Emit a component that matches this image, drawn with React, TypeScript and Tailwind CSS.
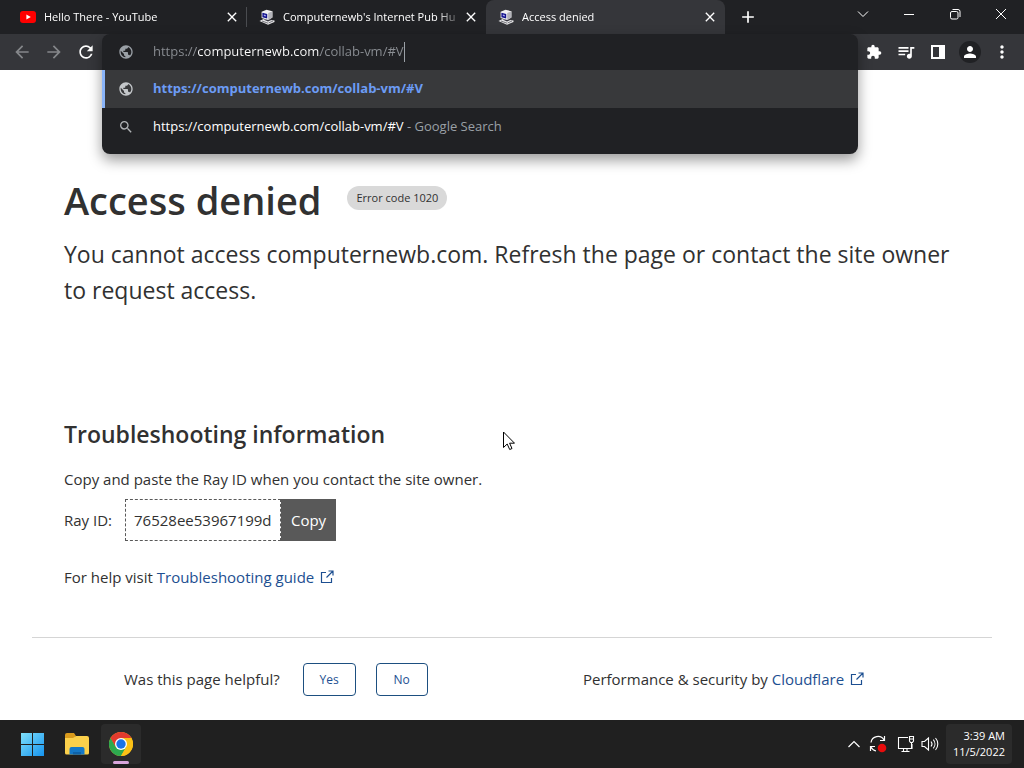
import { useState } from "react";
import {
  MdAdd,
  MdArrowBack,
  MdArrowForward,
  MdClose,
  MdExtension,
  MdMoreVert,
  MdPerson,
  MdPublic,
  MdQueueMusic,
  MdRefresh,
  MdSearch,
} from "react-icons/md";

const YoutubeIcon = () => (
  <svg className="w-4 h-4 shrink-0" viewBox="0 0 16 16">
    <rect x="0" y="2" width="16" height="12" rx="3" fill="#f00" />
    <path d="M6.4 5.4v5.2L10.8 8z" fill="#fff" />
  </svg>
);

const ComputerIcon = () => (
  <svg className="w-4 h-4 shrink-0" viewBox="0 0 16 16">
    <path d="M.5 12l4-2 11 1.500v1.500L9 15.800z" fill="#e8e8ea" />
    <path d="M3 12l6 2.200M9.500 14l4.500-2" stroke="#55555c" strokeWidth="0.8" />
    <path d="M4.500 10.500l5-.5 3.500.7-4 1.800z" fill="#3a3a42" />
    <path d="M2.600 2.800L7.500.8l5.900 1.400v6.200L9.200 11 2.600 9z" fill="#f1f1f1" />
    <path d="M9.200 4l4.200-1.800v6.200L9.200 11z" fill="#b4b4ba" />
    <path d="M3.400 3.800l4.800 1.200v4.400L3.400 8.200z" fill="#14148c" />
    <path d="M4.800 5.600l2 .5v1.500l-2-.5z" fill="#a8a8f0" />
  </svg>
);

const ExternalIcon = () => (
  <svg
    className="w-3.5 h-3.5 inline-block ml-0.5 align-[-1px]"
    viewBox="0 0 14 14"
    fill="none"
    stroke="currentColor"
    strokeWidth="1.2"
  >
    <path d="M6 2.5H1.500v10h10V8M8.500 1H13v4.500M13 1L6.500 7.500" />
  </svg>
);

const ChromeIcon = () => (
  <svg className="w-6 h-6" viewBox="0 0 24 24">
    <circle cx="12" cy="12" r="12" fill="#fbc116" />
    <path d="M1.6 6A12 12 0 0 0 12 24l5.2-9L12 12 6.8 15z" fill="#2da94f" />
    <path d="M1.6 6L6.8 15 12 12V6z" fill="#2da94f" />
    <path d="M1.6 6A12 12 0 0 1 22.4 6H12a6 6 0 0 0-5.6 4z" fill="#e33b2e" />
    <path d="M1.6 6L6.800 15 8 10l4-4z" fill="#e33b2e" />
    <path d="M22.4 6A12 12 0 0 1 12 24l5.2-9a6 6 0 0 0 0-6L12 6z" fill="#fbc116" />
    <circle cx="12" cy="12" r="6" fill="#fff" />
    <circle cx="12" cy="12" r="4.7" fill="#1a73e8" />
  </svg>
);

const tabs = [
  { title: "Hello There - YouTube", icon: <YoutubeIcon /> },
  { title: "Computernewb's Internet Pub Hu", icon: <ComputerIcon /> },
  { title: "Access denied", icon: <ComputerIcon /> },
];

function TabStrip() {
  const [active, setActive] = useState(2);

  return (
    <div className="flex h-[34px] bg-[#202124] text-white pl-2">
      {tabs.map((tab, index) => (
        <div
          key={index}
          className={
            "flex items-center w-[239px] pl-3 pr-[7px] " +
            (index === active ? "bg-[#35363a] rounded-t-lg" : "")
          }
        >
          <button
            className="flex flex-1 min-w-0 items-center gap-2 text-left"
            onClick={() => setActive(index)}
          >
            {tab.icon}
            <span className="flex-1 whitespace-nowrap text-[11px] mask-[linear-gradient(90deg,#000_154px,transparent_180px)]">
              {tab.title}
            </span>
          </button>
          <button aria-label="Close tab">
            <MdClose className="w-4 h-4" />
          </button>
          {index === 0 && <span className="w-px h-5 -mr-[7px] ml-1.5 bg-[#4a4c50]" />}
        </div>
      ))}
      <button aria-label="New tab" className="ml-[13px]">
        <MdAdd className="w-5 h-5" />
      </button>

      <div className="flex ml-auto h-7">
        <button aria-label="Search tabs" className="flex w-[46px] items-center justify-center">
          <svg className="w-3 h-3" viewBox="0 0 12 12" fill="none" stroke="#fff">
            <path d="M1 3.5l5 5 5-5" />
          </svg>
        </button>
        <button aria-label="Minimize" className="flex w-[46px] items-center justify-center">
          <svg className="w-3 h-3" viewBox="0 0 12 12" fill="none" stroke="#fff">
            <path d="M1 6.5h10" />
          </svg>
        </button>
        <button aria-label="Restore" className="flex w-[46px] items-center justify-center">
          <svg className="w-3 h-3" viewBox="0 0 12 12" fill="none" stroke="#fff">
            <rect x="1.5" y="3.5" width="7.5" height="7.5" rx="1.5" />
            <path d="M3.5 1.5H9a2 2 0 0 1 2 2V9" />
          </svg>
        </button>
        <button aria-label="Close" className="flex w-[46px] items-center justify-center">
          <svg className="w-3 h-3" viewBox="0 0 12 12" fill="none" stroke="#fff">
            <path d="M1 1l10 10M11 1L1 11" />
          </svg>
        </button>
      </div>
    </div>
  );
}

function Omnibox() {
  const [url, setUrl] = useState("https://computernewb.com/collab-vm/#V");

  return (
    <div className="absolute inset-x-0 top-0 z-10 pb-2 rounded-lg bg-[#202124] text-[13px] text-white shadow-[0_6px_14px_rgba(0,0,0,0.4)]">
      <div className="flex items-center h-9 pl-4">
        <MdPublic className="w-4 h-4 mr-[19px] text-[#9aa0a6]" />
        <input
          aria-label="Address"
          className="field-sizing-content outline-none text-transparent bg-clip-text bg-[linear-gradient(90deg,#8b8f94_44px,#fff_44px,#fff_167px,#8b8f94_167px)]"
          value={url}
          onChange={(e) => setUrl(e.target.value)}
        />
        <span className="w-px h-5 bg-[#9aa0a6]" />
      </div>
      <button className="flex items-center w-full h-[38px] pl-[13px] border-l-3 border-[#8ab4f8] bg-[#38393b]">
        <MdPublic className="w-4 h-4 mr-[19px] text-[#c4c7ca]" />
        <span className="font-bold text-[#6c9cf5]">{url}</span>
      </button>
      <button className="flex items-center w-full h-[38px] pl-4">
        <MdSearch className="w-4 h-4 mr-[19px] text-[#b0b3b6]" />
        <span>{url}</span>
        <span className="text-[#9aa0a6] whitespace-pre"> - Google Search</span>
      </button>
    </div>
  );
}

function Toolbar() {
  return (
    <div className="flex h-9 bg-[#35363a] text-white">
      <div className="flex items-center gap-3 w-[102px] pl-3">
        <button aria-label="Back">
          <MdArrowBack className="w-5 h-5 text-[#85878a]" />
        </button>
        <button aria-label="Forward">
          <MdArrowForward className="w-5 h-5 text-[#85878a]" />
        </button>
        <button aria-label="Reload">
          <MdRefresh className="w-5 h-5" />
        </button>
      </div>
      <div className="relative flex-1">
        <Omnibox />
      </div>
      <div className="flex items-center w-[166px]">
        <button aria-label="Extensions" className="flex w-8 justify-center">
          <MdExtension className="w-4 h-4" />
        </button>
        <button aria-label="Media controls" className="flex w-8 justify-center">
          <MdQueueMusic className="w-5 h-5" />
        </button>
        <button aria-label="Side panel" className="flex w-8 justify-center">
          <svg className="w-4 h-4" viewBox="0 0 16 16">
            <path d="M1 1h14v14H1zM3 3v10h6V3z" fill="#fff" fillRule="evenodd" />
          </svg>
        </button>
        <button aria-label="Profile" className="flex w-8 justify-center">
          <span className="flex items-center justify-center w-[22px] h-[22px] rounded-full bg-[#202124]">
            <MdPerson className="w-[18px] h-[18px]" />
          </span>
        </button>
        <button aria-label="Menu" className="flex w-8 justify-center">
          <MdMoreVert className="w-5 h-5" />
        </button>
      </div>
    </div>
  );
}

function ErrorPage() {
  return (
    <div className="flex-1 bg-white text-[#313131]">
      <main className="px-16 pt-25">
        <div className="flex items-center gap-[26px]">
          <h1 className="text-[38px] leading-[60px] font-semibold">Access denied</h1>
          <span className="px-[9px] mb-1 rounded-full bg-[#d9d9d9] text-[11px] leading-6">
            Error code 1020
          </span>
        </div>
        <p className="mt-1.5 text-[23px] leading-9">
          You cannot access computernewb.com. Refresh the page or contact the site owner to
          request access.
        </p>

        <h2 className="mt-27 text-[23px] leading-9 font-semibold">
          Troubleshooting information
        </h2>
        <p className="mt-[15px] text-[15px] leading-6">
          Copy and paste the Ray ID when you contact the site owner.
        </p>
        <div className="flex items-center mt-2 text-[15px]">
          <label htmlFor="ray-id" className="mr-[13px]">
            Ray ID:
          </label>
          <input
            id="ray-id"
            readOnly
            value="76528ee53967199d"
            className="w-[156px] h-[42px] px-2 border border-dashed border-[#595959] outline-none"
          />
          <button className="h-[42px] w-[55px] bg-[#595959] text-white">Copy</button>
        </div>
        <p className="mt-6 text-[15px] leading-6">
          For help visit{" "}
          <a href="#guide" className="text-[#1d4f91]">
            Troubleshooting guide <ExternalIcon />
          </a>
        </p>
      </main>

      <footer className="flex flex-wrap items-center justify-between mx-8 mt-12 pt-[25px] pb-6 pl-23 pr-32 border-t border-[#d5d5d5] text-[15px]">
        <div className="flex items-center gap-[23px]">
          <span>Was this page helpful?</span>
          <div className="flex gap-5">
            <button className="w-[53px] h-[33px] border border-[#1d4f80] rounded text-xs text-[#1d4f91]">
              Yes
            </button>
            <button className="w-[52px] h-[33px] border border-[#1d4f80] rounded text-xs text-[#1d4f91]">
              No
            </button>
          </div>
        </div>
        <div>
          Performance &amp; security by{" "}
          <a href="#cloudflare" className="text-[#1d4f91]">
            Cloudflare <ExternalIcon />
          </a>
        </div>
      </footer>
    </div>
  );
}

function Taskbar() {
  return (
    <div className="flex items-center justify-between h-12 pl-[13px] pr-3 bg-[#202020] text-white">
      <div className="flex gap-1">
        <button aria-label="Start" className="flex items-center justify-center w-10 h-10">
          <svg className="w-6 h-6" viewBox="0 0 24 24">
            <defs>
              <linearGradient id="win" x1="0" y1="0" x2="1" y2="1">
                <stop offset="0" stopColor="#7fe0fb" />
                <stop offset="1" stopColor="#1593ee" />
              </linearGradient>
            </defs>
            <path d="M0 1h11v11H0zM12 1h11v11H12zM0 13h11v11H0zM12 13h11v11H12z" fill="url(#win)" />
          </svg>
        </button>
        <button aria-label="File Explorer" className="flex items-center justify-center w-10 h-10">
          <svg className="w-6 h-6" viewBox="0 0 24 24">
            <path d="M0 3a2 2 0 0 1 2-2h7l2 3-3 4H0z" fill="#d99a1c" />
            <path d="M0 6h8l3-2h11a2 2 0 0 1 2 2v15a1.500 1.500 0 0 1-1.500 1.500h-21A1.500 1.500 0 0 1 0 21z" fill="#fbd04b" />
            <path d="M4.500 22.500V17a2 2 0 0 1 2-2h11a2 2 0 0 1 2 2v5.500z" fill="#1478c8" />
            <path d="M8 22.500V20h8v2.500z" fill="#0f62a8" />
          </svg>
        </button>
        <button
          aria-label="Google Chrome"
          className="relative flex items-center justify-center w-10 h-10 rounded bg-[#2b2b2b]"
        >
          <ChromeIcon />
          <span className="absolute bottom-0 inset-x-3 h-[3px] rounded-full bg-[#d9a5dc]" />
        </button>
      </div>

      <div className="flex items-center">
        <button aria-label="Show hidden icons" className="mr-[7px]">
          <svg className="w-4 h-4" viewBox="0 0 16 16" fill="none" stroke="#fff" strokeWidth="1.2">
            <path d="M2.500 11L8 5.500l5.500 5.500" />
          </svg>
        </button>
        <button aria-label="Windows Update" className="mr-2.5">
          <svg className="w-[18px] h-[18px]" viewBox="0 0 18 18" fill="none" stroke="#fff" strokeWidth="1.2">
            <path d="M2 7.500A7 7 0 0 1 15 5M15.500 1v4.500H11M1.500 16v-4.500H6M2 12a7 7 0 0 0 5 4" />
            <circle cx="13" cy="13" r="4.300" fill="#e80c0c" stroke="none" />
          </svg>
        </button>
        <button aria-label="Network" className="mr-1.5">
          <svg className="w-[18px] h-[18px]" viewBox="0 0 18 18" fill="none" stroke="#fff" strokeWidth="1.100">
            <path d="M11 2.500H1.500v11H15V9M4.500 16.500h8M6.500 13.500v3M10 13.500v3M12.500 1.500h4V6l-1 1.500h-2l-1-1.500zM14.500 7.500v6M12.500 4h4" />
          </svg>
        </button>
        <button aria-label="Volume" className="mr-[7px]">
          <svg className="w-[18px] h-[18px]" viewBox="0 0 18 18" fill="none" stroke="#fff" strokeWidth="1.100">
            <path d="M1 6.500h2.500L7.500 3v12l-4-3.500H1zM10 6.500a4 4 0 0 1 0 5M12.300 4.700a6.500 6.500 0 0 1 0 8.600M14.500 3a9 9 0 0 1 0 12" />
          </svg>
        </button>
        <button className="w-[66px] h-10 pr-[7px] rounded bg-[#2b2b2b] text-right text-[11px] leading-4">
          <div>3:39 AM</div>
          <div>11/5/2022</div>
        </button>
      </div>
    </div>
  );
}

function App() {
  return (
    <div className="relative flex flex-col min-h-screen font-['Open_Sans','Noto_Sans',sans-serif]">
      <TabStrip />
      <Toolbar />
      <ErrorPage />
      <Taskbar />
      {/* mouse pointer */}
      <svg className="absolute left-[503px] top-[431px] w-3 h-5" viewBox="0 0 12 20">
        <path
          d="M.5 1v15.500l3.700-3.500 2.500 5.500 2.300-1-2.400-5.300H11.500z"
          fill="#fff"
          stroke="#000"
        />
      </svg>
    </div>
  );
}

export default App;
